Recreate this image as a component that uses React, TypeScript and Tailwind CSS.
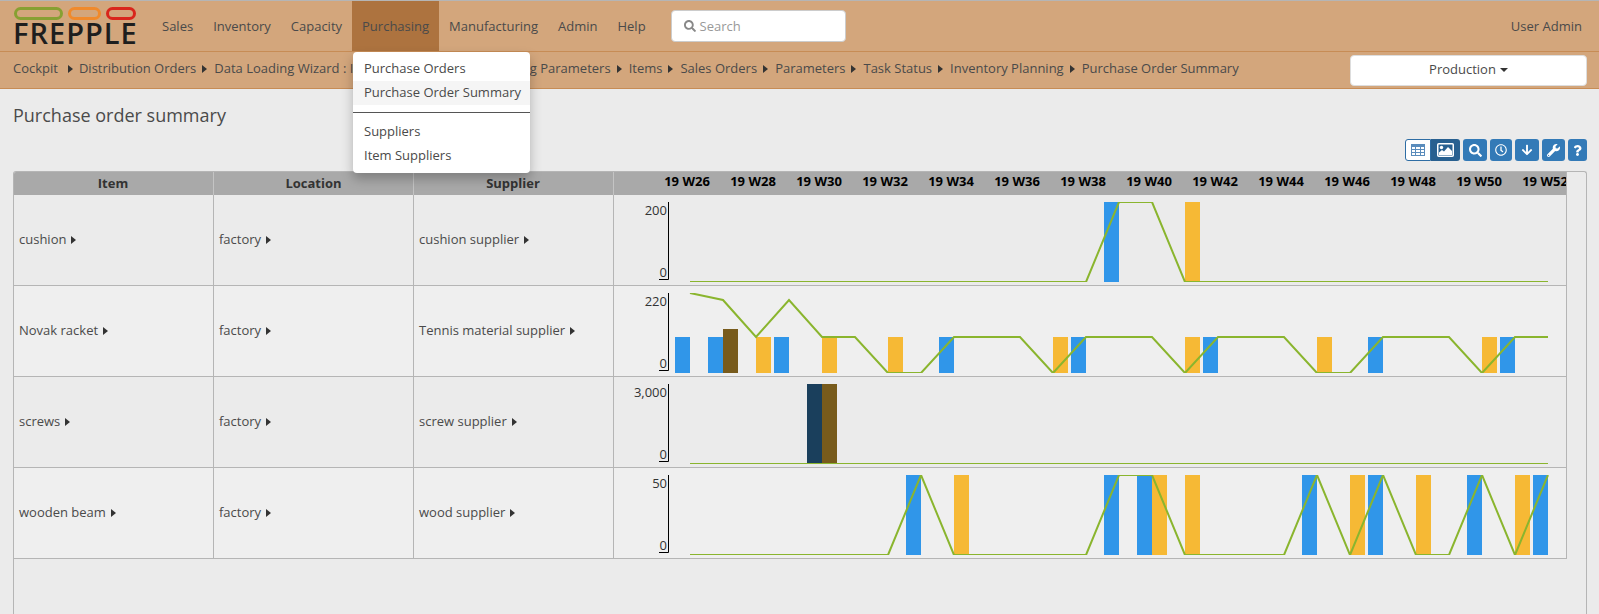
import React from "react";
import { FaSearch, FaRegClock, FaArrowDown, FaWrench, FaQuestion } from "react-icons/fa";

type Bar = { i: number; kind: "blue" | "orange" | "brown" | "navy"; top?: number };

type Row = {
  item: string;
  supplier: string;
  max: string;
  top: number;
  line: [number, number][];
  bars: Bar[];
};

const BLUE = "#3096e9";
const ORANGE = "#f6b935";
const BROWN = "#785b1c";
const NAVY = "#1a3f5c";

const HI = 7;
const LO = 87;
const MID = 51;

const rows: Row[] = [
  {
    item: "cushion",
    supplier: "cushion supplier",
    max: "200",
    top: 7,
    line: [[0, LO], [12, LO], [13, HI], [14, HI], [15, LO], [26, LO]],
    bars: [
      { i: 13, kind: "blue" },
      { i: 15, kind: "orange" },
    ],
  },
  {
    item: "Novak racket",
    supplier: "Tennis material supplier",
    max: "220",
    top: 51,
    line: [
      [0, 7], [1, 14], [2, MID], [3, 14], [4, MID], [5, MID], [6, LO], [7, LO], [8, MID], [10, MID], [11, LO],
      [12, MID], [14, MID], [15, LO], [16, MID], [18, MID], [19, LO], [20, LO], [21, MID], [23, MID], [24, LO],
      [25, MID], [26, MID],
    ],
    bars: [
      { i: 0, kind: "blue" },
      { i: 1, kind: "blue" },
      { i: 1, kind: "brown", top: 43 },
      { i: 2, kind: "orange" },
      { i: 3, kind: "blue" },
      { i: 4, kind: "orange" },
      { i: 6, kind: "orange" },
      { i: 8, kind: "blue" },
      { i: 11, kind: "orange" },
      { i: 12, kind: "blue" },
      { i: 15, kind: "orange" },
      { i: 16, kind: "blue" },
      { i: 19, kind: "orange" },
      { i: 21, kind: "blue" },
      { i: 24, kind: "orange" },
      { i: 25, kind: "blue" },
    ],
  },
  {
    item: "screws",
    supplier: "screw supplier",
    max: "3,000",
    top: 7,
    line: [[0, LO], [26, LO]],
    bars: [
      { i: 4, kind: "navy" },
      { i: 4, kind: "brown" },
    ],
  },
  {
    item: "wooden beam",
    supplier: "wood supplier",
    max: "50",
    top: 7,
    line: [
      [0, LO], [6, LO], [7, HI], [8, LO], [12, LO], [13, HI], [14, HI], [15, LO], [18, LO], [19, HI], [20, LO],
      [21, HI], [22, LO], [23, LO], [24, HI], [25, LO], [26, HI],
    ],
    bars: [
      { i: 7, kind: "blue" },
      { i: 8, kind: "orange" },
      { i: 13, kind: "blue" },
      { i: 14, kind: "blue" },
      { i: 14, kind: "orange" },
      { i: 15, kind: "orange" },
      { i: 19, kind: "blue" },
      { i: 20, kind: "orange" },
      { i: 21, kind: "blue" },
      { i: 22, kind: "orange" },
      { i: 24, kind: "blue" },
      { i: 25, kind: "orange" },
      { i: 26, kind: "blue" },
    ],
  },
];

const navItems = ["Sales", "Inventory", "Capacity", "Purchasing", "Manufacturing", "Admin", "Help"];
const crumbs = [
  "Distribution Orders",
  "Data Loading Wizard : Inventory Planning",
  "Planning Parameters",
  "Items",
  "Sales Orders",
  "Parameters",
  "Task Status",
  "Inventory Planning",
];
const weeks = ["26", "28", "30", "32", "34", "36", "38", "40", "42", "44", "46", "48", "50", "52"];

function Caret() {
  return (
    <svg width="5" height="8" viewBox="0 0 5 8" className="shrink-0">
      <path d="M0 0 L5 4 L0 8 Z" fill="#333" />
    </svg>
  );
}

function TableIcon() {
  return (
    <svg width="14" height="12" viewBox="0 0 14 12">
      <path d="M0 0 H14 V12 H0 Z" fill="#5a8cbc" />
      <path
        d="M1 3 H4 V5 H1 Z M5 3 H9 V5 H5 Z M10 3 H13 V5 H10 Z M1 6 H4 V8 H1 Z M5 6 H9 V8 H5 Z M10 6 H13 V8 H10 Z M1 9 H4 V11 H1 Z M5 9 H9 V11 H5 Z M10 9 H13 V11 H10 Z"
        fill="#fff"
      />
    </svg>
  );
}

function PictureIcon() {
  return (
    <svg width="17" height="14" viewBox="0 0 17 14">
      <rect x="0.75" y="0.75" width="15.5" height="12.5" rx="1" fill="none" stroke="#fff" strokeWidth="1.5" />
      <circle cx="4.5" cy="4.5" r="1.7" fill="#fff" />
      <path d="M2 12 L2 9.5 L5 7 L7 8.5 L11 4 L15 8 L15 12 Z" fill="#fff" />
    </svg>
  );
}

// x of week i inside the chart cell
const px = (i: number) => 76 + 33 * i;

function Chart({ row, id }: { row: Row; id: string }) {
  const bottom = row.max === "3,000" ? 86 : 87;
  return (
    <svg width="953" height="90" className="block">
      <defs>
        <clipPath id={id}>
          <rect x="0" y="7" width="953" height="80" />
        </clipPath>
      </defs>
      <path d="M54.5 7 V84.5 H45" fill="none" stroke="#000" strokeWidth="1" />
      <text x="53" y="20" textAnchor="end" fontSize="13" fill="#333">{row.max}</text>
      <text x="53" y="82" textAnchor="end" fontSize="13" fill="#333">0</text>
      {row.bars.map((b, n) => {
        const color = b.kind === "blue" ? BLUE : b.kind === "orange" ? ORANGE : b.kind === "brown" ? BROWN : NAVY;
        const left = b.kind === "blue" || b.kind === "navy";
        const top = b.top ?? row.top;
        return (
          <rect key={n} x={left ? px(b.i) - 15 : px(b.i)} y={top} width="15" height={bottom - top} fill={color} />
        );
      })}
      <polyline
        points={row.line.map(([i, y]) => `${px(i)},${y}`).join(" ")}
        fill="none"
        stroke="#8ab52e"
        strokeWidth="2"
        clipPath={`url(#${id})`}
      />
    </svg>
  );
}

function ToolButton({ className, children }: { className: string; children: React.ReactNode }) {
  return (
    <button className={`h-[22px] flex items-center justify-center rounded-[3px] bg-[#337ab7] text-white ${className}`}>
      {children}
    </button>
  );
}

export default function App() {
  return (
    <div className="h-[614px] overflow-hidden bg-[#ebebeb] font-['Open_Sans',sans-serif] text-[13px] text-[#4a4a4a] flex flex-col">
      {/* NAVBAR */}
      <div className="relative h-[52px] shrink-0 flex items-stretch bg-[#d3a67c] border-t border-t-[#b5b5b5] border-b border-b-[#c78c55]">
        <div className="w-[152px] shrink-0 pl-[14px] pt-[6px]">
          <div className="flex gap-[5px]">
            <div className="w-[49px] h-[13px] rounded-full border-[3px] border-[#87a032]" />
            <div className="w-[33px] h-[13px] rounded-full border-[3px] border-[#f08a2c]" />
            <div className="w-[30px] h-[13px] rounded-full border-[3px] border-[#d9261c]" />
          </div>
          <div className="-ml-[1px] -mt-[1px] text-[29px] leading-[27px] font-semibold tracking-[1px] text-[#1e1e1e]">FREPPLE</div>
        </div>
        {navItems.map((n) => (
          <div
            key={n}
            className={`px-[10px] pt-[16px] leading-[18px] ${n === "Purchasing" ? "bg-[#ad733f]" : ""}`}
          >
            {n}
          </div>
        ))}
        <div className="ml-[15px] mt-[9px] w-[175px] h-[32px] flex items-center gap-[4px] pl-[12px] rounded-[4px] bg-white border border-[#ccc] text-[#999]">
          <FaSearch size={12} className="text-[#888]" />
          <span className="pt-[1px]">Search</span>
        </div>
        <div className="ml-auto pr-[17px] pt-[16px] leading-[18px]">User Admin</div>

        {/* PURCHASING MENU */}
        <div className="absolute z-10 left-[353px] top-[51px] w-[177px] py-[5px] rounded-[4px] bg-white shadow-[0_6px_12px_rgba(0,0,0,0.25)] whitespace-nowrap">
          <div className="h-[24px] px-[11px] leading-[22px]">Purchase Orders</div>
          <div className="h-[24px] px-[11px] leading-[22px] bg-[#f5f5f5]">Purchase Order Summary</div>
          <div className="my-[7px] h-px bg-[#555]" />
          <div className="h-[24px] px-[11px] leading-[22px]">Suppliers</div>
          <div className="h-[24px] px-[11px] leading-[22px]">Item Suppliers</div>
        </div>
      </div>

      {/* BREADCRUMBS */}
      <div className="h-[37px] shrink-0 flex items-center pl-[13px] pr-[12px] bg-[#d3a67c] border-b border-b-[#c78c55]">
        <div className="flex items-center pb-[2px] whitespace-nowrap">
          <span>Cockpit</span>
          <span className="ml-[10px] mr-[6px]"><Caret /></span>
          {crumbs.map((c) => (
            <React.Fragment key={c}>
              <span className={c.startsWith("Data") ? "pr-[3px]" : ""}>{c}</span>
              <span className="ml-[6px] mr-[7px]"><Caret /></span>
            </React.Fragment>
          ))}
          <span>Purchase Order Summary</span>
        </div>
        <button className="ml-auto w-[237px] h-[31px] flex items-center justify-center gap-[4px] rounded-[4px] bg-white border border-[#ddd]">
          Production
          <svg width="8" height="4" viewBox="0 0 8 4"><path d="M0 0 H8 L4 4 Z" fill="#333" /></svg>
        </button>
      </div>

      {/* TITLE + TOOLBAR */}
      <div className="h-[82px] shrink-0 pl-[13px] pr-[12px] flex justify-between">
        <h1 className="mt-[13px] text-[18px] leading-[26px] text-[#4a4a4a]">Purchase order summary</h1>
        <div className="mt-[50px] flex gap-[3px]">
          <div className="flex">
            <button className="w-[26px] h-[22px] flex items-center justify-center rounded-l-[3px] bg-white border border-[#2e6da4]">
              <TableIcon />
            </button>
            <button className="w-[29px] h-[22px] flex items-center justify-center rounded-r-[3px] bg-[#286090]">
              <PictureIcon />
            </button>
          </div>
          <ToolButton className="w-[24px]"><FaSearch size={13} /></ToolButton>
          <ToolButton className="w-[22px]"><FaRegClock size={12} /></ToolButton>
          <ToolButton className="w-[24px]"><FaArrowDown size={12} /></ToolButton>
          <ToolButton className="w-[23px]"><FaWrench size={13} /></ToolButton>
          <ToolButton className="w-[19px]"><FaQuestion size={11} /></ToolButton>
        </div>
      </div>

      {/* GRID */}
      <div className="ml-[13px] w-[1574px] flex-1 border-x border-t border-[#b5b5b5] rounded-t-[3px] overflow-hidden">
        <div className="w-[1553px] border-r border-r-[#b5b5b5]">
          <div className="h-[23px] grid grid-cols-[200px_200px_200px_1fr] bg-[#a9a9a9] font-bold text-[#333] leading-[23px] text-center">
            <div className="border-r border-r-[#c4c4c4] pr-[1px]">Item</div>
            <div className="border-r border-r-[#c4c4c4]">Location</div>
            <div className="border-r border-r-[#c4c4c4] pr-[1px]">Supplier</div>
            <div className="flex pl-[40px] overflow-hidden text-black leading-[18px]">
              {weeks.map((w) => (
                <div key={w} className="w-[66px] shrink-0 whitespace-nowrap">19 W{w}</div>
              ))}
            </div>
          </div>
          {rows.map((r, idx) => (
            <div
              key={r.item}
              className={`h-[91px] grid grid-cols-[200px_200px_200px_1fr] border-b border-b-[#b5b5b5] ${idx % 2 ? "bg-[#efefef]" : "bg-[#ebebeb]"}`}
            >
              <div className="border-r border-r-[#b5b5b5] pl-[5px] flex items-center gap-[5px]">{r.item} <Caret /></div>
              <div className="border-r border-r-[#b5b5b5] pl-[5px] flex items-center gap-[5px]">factory <Caret /></div>
              <div className="border-r border-r-[#b5b5b5] pl-[5px] flex items-center gap-[5px]">{r.supplier} <Caret /></div>
              <div><Chart row={r} id={`clip-${idx}`} /></div>
            </div>
          ))}
        </div>
      </div>
    </div>
  );
}
